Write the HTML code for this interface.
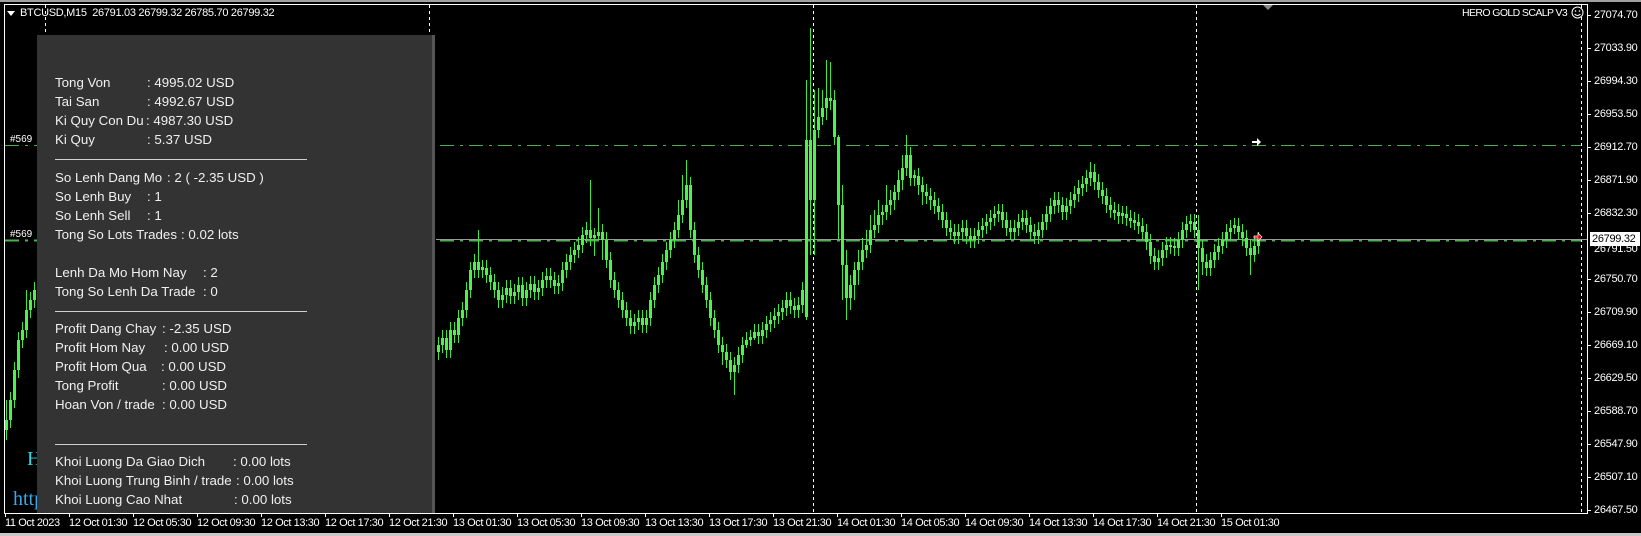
<!DOCTYPE html>
<html><head><meta charset="utf-8">
<style>
html,body{margin:0;padding:0;background:#000;}
#w{position:relative;width:1641px;height:536px;overflow:hidden;background:#000;font-family:"Liberation Sans",Arial,sans-serif;}
.top{position:absolute;left:0;top:0;width:1641px;height:2px;background:#a0a0a0;}
.bot{position:absolute;left:0;top:533px;width:1641px;height:3px;background:#c8c8c8;}
svg{position:absolute;left:0;top:0;}
.hdr{position:absolute;left:20px;top:7px;font-size:11px;color:#fff;white-space:pre;letter-spacing:-0.3px}
.panel{position:absolute;left:37px;top:35px;width:395px;height:478px;background:#333333;border-right:3px solid #555;}
.t{position:absolute;font-size:13.3px;color:#f0f0f0;white-space:pre;line-height:16px;}
.d{position:absolute;left:55px;width:252px;height:1px;background:#d0d0d0;}
.pl{position:absolute;left:1594px;font-size:11px;color:#fff;letter-spacing:-0.3px;line-height:13px}
.dl{position:absolute;top:517px;font-size:11px;color:#fff;letter-spacing:-0.4px;white-space:pre}
</style></head><body><div id="w">
<div class="top"></div>
<svg width="1641" height="536">
<rect x="4.5" y="4.5" width="1583" height="509" fill="none" stroke="#fff"/>
<g stroke="#fff" stroke-dasharray="3,3">
<line x1="45.5" y1="5" x2="45.5" y2="513"/><line x1="429.5" y1="5" x2="429.5" y2="513"/><line x1="813.5" y1="5" x2="813.5" y2="513"/><line x1="1196.5" y1="5" x2="1196.5" y2="513"/><line x1="1581.5" y1="5" x2="1581.5" y2="513"/>
</g>
<line x1="5" y1="145.5" x2="1581" y2="145.5" stroke="#4caf50" stroke-dasharray="14,6,3,6"/>
<line x1="5" y1="240.5" x2="1581" y2="240.5" stroke="#4caf50" stroke-width="2" stroke-dasharray="14,6,3,6"/>
<line x1="436" y1="239.5" x2="1587" y2="239.5" stroke="#9a9a9a"/>
<path stroke="#3ee63e" stroke-width="1" fill="none" d="M6.5 400V440M10.5 392V428M14.5 362V408M18.5 332V378M22.5 322V348M26.5 290V338M30.5 292V318M34.5 282V308
M438.5 337V360M442.5 330V353M446.5 330V358M450.5 322V358M454.5 322V343M458.5 310V343M462.5 302V326M466.5 282V318M470.5 262V298M474.5 254V278M478.5 230V278M482.5 260V278M486.5 260V283M490.5 267V290M494.5 274V298M498.5 282V308M502.5 287V308M506.5 280V303M510.5 280V304M514.5 284V304M518.5 277V300M522.5 277V306M526.5 282V306M530.5 276V298M534.5 276V300M538.5 280V300M542.5 272V296M546.5 268V288M550.5 268V288M554.5 272V294M558.5 275V294M562.5 262V291M566.5 254V278M570.5 247V270M574.5 242V263M578.5 237V258M582.5 227V253M586.5 222V243M590.5 180V246M594.5 228V256M598.5 208V240M602.5 224V260M606.5 232V268M610.5 252V288M614.5 272V298M618.5 282V308M622.5 292V318M626.5 302V326M630.5 310V334M634.5 314V334M638.5 310V330M642.5 310V333M646.5 310V333M650.5 292V326M654.5 277V308M658.5 267V293M662.5 254V283M666.5 242V270M670.5 232V258M674.5 222V248M678.5 200V238M682.5 175V223M686.5 160V208M690.5 177V238M694.5 222V263M698.5 247V278M702.5 262V293M706.5 277V308M710.5 292V326M714.5 310V338M718.5 322V353M722.5 337V365M726.5 344V368M730.5 352V380M734.5 357V395M738.5 347V373M742.5 337V363M746.5 332V348M750.5 330V346M754.5 324V340M758.5 324V344M762.5 322V344M766.5 316V338M770.5 312V332M774.5 308V328M778.5 304V324M782.5 300V320M786.5 292V316M790.5 292V314M794.5 298V318M798.5 297V318M802.5 282V313M806.5 80V320M810.5 28V255M814.5 90V255M818.5 88V138M822.5 90V125M826.5 60V120M830.5 62V110M834.5 90V145M838.5 135V240M842.5 185V300M846.5 250V320M850.5 275V310M854.5 262V300M858.5 250V285M862.5 238V270M866.5 230V258M870.5 215V253M874.5 210V238M878.5 200V233M882.5 205V225M886.5 185V220M890.5 190V215M894.5 185V210M898.5 170V200M902.5 155V190M906.5 135V176M910.5 147V186M914.5 170V186M918.5 168V195M922.5 177V205M926.5 184V204M930.5 188V210M934.5 192V214M938.5 198V220M942.5 204V228M946.5 212V236M950.5 220V240M954.5 224V244M958.5 224V244M962.5 220V240M966.5 220V244M970.5 228V248M974.5 228V248M978.5 222V244M982.5 218V238M986.5 214V234M990.5 210V230M994.5 206V226M998.5 204V222M1002.5 204V228M1006.5 212V236M1010.5 220V240M1014.5 220V240M1018.5 214V236M1022.5 210V230M1026.5 210V233M1030.5 217V240M1034.5 224V244M1038.5 222V244M1042.5 214V238M1046.5 206V230M1050.5 198V222M1054.5 192V214M1058.5 192V213M1062.5 197V220M1066.5 198V220M1070.5 192V214M1074.5 186V208M1078.5 180V202M1082.5 176V196M1086.5 170V192M1090.5 162V186M1094.5 164V190M1098.5 174V198M1102.5 182V204M1106.5 188V213M1110.5 197V218M1114.5 202V220M1118.5 204V224M1122.5 206V224M1126.5 206V226M1130.5 210V228M1134.5 212V230M1138.5 214V234M1142.5 218V240M1146.5 224V250M1150.5 234V264M1154.5 248V270M1158.5 250V270M1162.5 242V266M1166.5 237V258M1170.5 237V254M1174.5 238V256M1178.5 232V256M1182.5 222V248M1186.5 216V238M1190.5 214V232M1194.5 214V238M1198.5 215V290M1202.5 240V275M1206.5 254V276M1210.5 252V276M1214.5 244V268M1218.5 238V260M1222.5 232V254M1226.5 224V248M1230.5 220V240M1234.5 218V234M1238.5 218V240M1242.5 224V246M1246.5 230V256M1250.5 240V275M1254.5 238V262M1258.5 232V254"/>
<path stroke="#4df24d" stroke-width="3" fill="none" d="M6.5 430V420M10.5 420V400M14.5 400V370M18.5 370V340M22.5 340V330M26.5 330V310M30.5 310V300M34.5 300V290
M438.5 352V345M442.5 345V338M446.5 338V350M450.5 350V330M454.5 330V335M458.5 335V318M462.5 318V310M466.5 310V290M470.5 290V270M474.5 270V262M478.5 262V270M482.5 270V267M486.5 268V275M490.5 275V282M494.5 282V290M498.5 290V300M502.5 300V295M506.5 295V288M510.5 288V296M514.5 296V292M518.5 292V285M522.5 285V298M526.5 298V290M530.5 290V284M534.5 284V292M538.5 292V288M542.5 288V280M546.5 280V276M550.5 276V280M554.5 280V286M558.5 286V283M562.5 283V270M566.5 270V262M570.5 262V255M574.5 255V250M578.5 250V245M582.5 245V235M586.5 235V230M590.5 230V238M594.5 238V235M598.5 236V232M602.5 232V240M606.5 240V260M610.5 260V280M614.5 280V290M618.5 290V300M622.5 300V310M626.5 310V318M630.5 318V326M634.5 326V322M638.5 322V318M642.5 318V325M646.5 325V318M650.5 318V300M654.5 300V285M658.5 285V275M662.5 275V262M666.5 262V250M670.5 250V240M674.5 240V230M678.5 230V215M682.5 215V200M686.5 200V185M690.5 185V230M694.5 230V255M698.5 255V270M702.5 270V285M706.5 285V300M710.5 300V318M714.5 318V330M718.5 330V345M722.5 345V352M726.5 352V360M730.5 360V372M734.5 372V365M738.5 365V355M742.5 355V345M746.5 345V340M750.5 340V337M754.5 338V332M758.5 332V336M762.5 336V330M766.5 330V324M770.5 324V320M774.5 320V316M778.5 316V312M782.5 312V308M786.5 308V300M790.5 300V306M794.5 306V310M798.5 310V305M802.5 305V290M806.5 317V140M810.5 140V200M814.5 200V130M818.5 130V117M822.5 117V108M826.5 108V98M830.5 98V101M834.5 100V137M838.5 137V205M842.5 205V265M846.5 265V298M850.5 298V285M854.5 285V270M858.5 270V262M862.5 262V250M866.5 250V245M870.5 245V230M874.5 230V225M878.5 225V215M882.5 215V212M886.5 212V205M890.5 205V200M894.5 200V192M898.5 192V180M902.5 180V168M906.5 168V155M910.5 155V178M914.5 178V175M918.5 176V185M922.5 185V192M926.5 192V196M930.5 196V200M934.5 200V206M938.5 206V212M942.5 212V220M946.5 220V228M950.5 228V232M954.5 232V236M958.5 236V232M962.5 232V228M966.5 228V236M970.5 236V240M974.5 240V236M978.5 236V230M982.5 230V226M986.5 226V222M990.5 222V218M994.5 218V214M998.5 214V211M1002.5 212V220M1006.5 220V228M1010.5 228V232M1014.5 232V228M1018.5 228V222M1022.5 222V218M1026.5 218V225M1030.5 225V232M1034.5 232V236M1038.5 236V230M1042.5 230V222M1046.5 222V214M1050.5 214V206M1054.5 206V200M1058.5 200V205M1062.5 205V212M1066.5 212V206M1070.5 206V200M1074.5 200V194M1078.5 194V188M1082.5 188V184M1086.5 184V178M1090.5 178V172M1094.5 172V182M1098.5 182V190M1102.5 190V196M1106.5 196V205M1110.5 205V210M1114.5 210V213M1118.5 212V216M1122.5 216V213M1126.5 214V218M1130.5 218V221M1134.5 220V223M1138.5 222V226M1142.5 226V232M1146.5 232V242M1150.5 242V256M1154.5 256V262M1158.5 262V258M1162.5 258V250M1166.5 250V245M1170.5 245V247M1174.5 246V248M1178.5 248V240M1182.5 240V230M1186.5 230V224M1190.5 224V221M1194.5 222V230M1198.5 230V248M1202.5 248V262M1206.5 262V268M1210.5 268V260M1214.5 260V252M1218.5 252V246M1222.5 246V240M1226.5 240V232M1230.5 232V228M1234.5 228V225M1238.5 226V232M1242.5 232V238M1246.5 238V248M1250.5 248V255M1254.5 255V246M1258.5 246V240"/>
<path d="M1252 141h5v-3l4 4l-4 4v-3h-5z" fill="#fff"/>
<path d="M1254 236h4v-3l4 4l-4 4v-3h-4z" fill="#e00" stroke="#fff" stroke-width=".7"/>
<path d="M1263 5h10l-5 5z" fill="#888"/>
<path stroke="#fff" d="M1588 15.5h3M1588 48.5h3M1588 81.5h3M1588 114.5h3M1588 147.5h3M1588 180.5h3M1588 213.5h3M1588 279.5h3M1588 312.5h3M1588 345.5h3M1588 378.5h3M1588 411.5h3M1588 444.5h3M1588 477.5h3M1588 510.5h3
M5.5 513v4M69.5 513v4M133.5 513v4M197.5 513v4M261.5 513v4M325.5 513v4M389.5 513v4M453.5 513v4M517.5 513v4M581.5 513v4M645.5 513v4M709.5 513v4M773.5 513v4M837.5 513v4M901.5 513v4M965.5 513v4M1029.5 513v4M1093.5 513v4M1157.5 513v4M1221.5 513v4"/>
</svg>
<div class="hdr">BTCUSD,M15  26791.03 26799.32 26785.70 26799.32</div>
<div style="position:absolute;left:7px;top:11px;width:0;height:0;border-left:4px solid transparent;border-right:4px solid transparent;border-top:5px solid #fff"></div>
<div style="position:absolute;left:1462px;top:7px;font-size:10.5px;color:#fff;letter-spacing:-0.6px;white-space:nowrap">HERO GOLD SCALP V3</div>
<svg style="left:1571px;top:6px" width="13" height="13"><circle cx="6.5" cy="6.5" r="5.5" fill="#000" stroke="#fff"/><circle cx="4.5" cy="5" r=".8" fill="#fff"/><circle cx="8.5" cy="5" r=".8" fill="#fff"/><path d="M3.5 8q3 3 6 0" fill="none" stroke="#fff"/></svg>
<div style="position:absolute;left:10px;top:134px;font-size:10px;color:#fff">#569</div>
<div style="position:absolute;left:10px;top:229px;font-size:10px;color:#fff">#569</div>
<div style="position:absolute;left:27px;top:448px;font-size:20px;color:#2fd8e0;font-family:'Liberation Serif',serif">H</div>
<div style="position:absolute;left:13px;top:488px;font-size:20px;color:#3aa8e8;font-family:'Liberation Serif',serif">http</div>
<div class="panel"></div>

<div class="t" style="left:55px;top:75px">Tong Von</div><div class="t" style="left:147px;top:75px">: 4995.02 USD</div>
<div class="t" style="left:55px;top:94px">Tai San</div><div class="t" style="left:147px;top:94px">: 4992.67 USD</div>
<div class="t" style="left:55px;top:113px">Ki Quy Con Du</div><div class="t" style="left:146px;top:113px">: 4987.30 USD</div>
<div class="t" style="left:55px;top:132px">Ki Quy</div><div class="t" style="left:147px;top:132px">: 5.37 USD</div>
<div class="d" style="top:159px"></div>
<div class="t" style="left:55px;top:170px">So Lenh Dang Mo</div><div class="t" style="left:167px;top:170px">: 2 ( -2.35 USD )</div>
<div class="t" style="left:55px;top:189px">So Lenh Buy</div><div class="t" style="left:147px;top:189px">: 1</div>
<div class="t" style="left:55px;top:208px">So Lenh Sell</div><div class="t" style="left:147px;top:208px">: 1</div>
<div class="t" style="left:55px;top:227px">Tong So Lots Trades</div><div class="t" style="left:181px;top:227px">: 0.02 lots</div>
<div class="t" style="left:55px;top:265px">Lenh Da Mo Hom Nay</div><div class="t" style="left:203px;top:265px">: 2</div>
<div class="t" style="left:55px;top:284px">Tong So Lenh Da Trade</div><div class="t" style="left:203px;top:284px">: 0</div>
<div class="d" style="top:311px"></div>
<div class="t" style="left:55px;top:321px">Profit Dang Chay</div><div class="t" style="left:162px;top:321px">: -2.35 USD</div>
<div class="t" style="left:55px;top:340px">Profit Hom Nay</div><div class="t" style="left:164px;top:340px">: 0.00 USD</div>
<div class="t" style="left:55px;top:359px">Profit Hom Qua</div><div class="t" style="left:161px;top:359px">: 0.00 USD</div>
<div class="t" style="left:55px;top:378px">Tong Profit</div><div class="t" style="left:162px;top:378px">: 0.00 USD</div>
<div class="t" style="left:55px;top:397px">Hoan Von / trade</div><div class="t" style="left:162px;top:397px">: 0.00 USD</div>
<div class="d" style="top:444px"></div>
<div class="t" style="left:55px;top:454px">Khoi Luong Da Giao Dich</div><div class="t" style="left:233px;top:454px">: 0.00 lots</div>
<div class="t" style="left:55px;top:473px">Khoi Luong Trung Binh / trade</div><div class="t" style="left:236px;top:473px">: 0.00 lots</div>
<div class="t" style="left:55px;top:492px">Khoi Luong Cao Nhat</div><div class="t" style="left:234px;top:492px">: 0.00 lots</div>

<div class="pl" style="top:9px">27074.70</div>
<div class="pl" style="top:42px">27033.90</div>
<div class="pl" style="top:75px">26994.30</div>
<div class="pl" style="top:108px">26953.50</div>
<div class="pl" style="top:141px">26912.70</div>
<div class="pl" style="top:174px">26871.90</div>
<div class="pl" style="top:207px">26832.30</div>
<div class="pl" style="top:243px">26791.50</div>
<div class="pl" style="top:273px">26750.70</div>
<div class="pl" style="top:306px">26709.90</div>
<div class="pl" style="top:339px">26669.10</div>
<div class="pl" style="top:372px">26629.50</div>
<div class="pl" style="top:405px">26588.70</div>
<div class="pl" style="top:438px">26547.90</div>
<div class="pl" style="top:471px">26507.10</div>
<div class="pl" style="top:504px">26467.50</div>
<div style="position:absolute;left:1590px;top:232px;width:48px;height:14px;background:#fff;color:#000;font-size:11px;line-height:14px;padding-left:2px;letter-spacing:-0.3px">26799.32</div>

<div class="dl" style="left:5px">11 Oct 2023</div>
<div class="dl" style="left:69px">12 Oct 01:30</div>
<div class="dl" style="left:133px">12 Oct 05:30</div>
<div class="dl" style="left:197px">12 Oct 09:30</div>
<div class="dl" style="left:261px">12 Oct 13:30</div>
<div class="dl" style="left:325px">12 Oct 17:30</div>
<div class="dl" style="left:389px">12 Oct 21:30</div>
<div class="dl" style="left:453px">13 Oct 01:30</div>
<div class="dl" style="left:517px">13 Oct 05:30</div>
<div class="dl" style="left:581px">13 Oct 09:30</div>
<div class="dl" style="left:645px">13 Oct 13:30</div>
<div class="dl" style="left:709px">13 Oct 17:30</div>
<div class="dl" style="left:773px">13 Oct 21:30</div>
<div class="dl" style="left:837px">14 Oct 01:30</div>
<div class="dl" style="left:901px">14 Oct 05:30</div>
<div class="dl" style="left:965px">14 Oct 09:30</div>
<div class="dl" style="left:1029px">14 Oct 13:30</div>
<div class="dl" style="left:1093px">14 Oct 17:30</div>
<div class="dl" style="left:1157px">14 Oct 21:30</div>
<div class="dl" style="left:1221px">15 Oct 01:30</div>
<div class="bot"></div>
</div></body></html>
